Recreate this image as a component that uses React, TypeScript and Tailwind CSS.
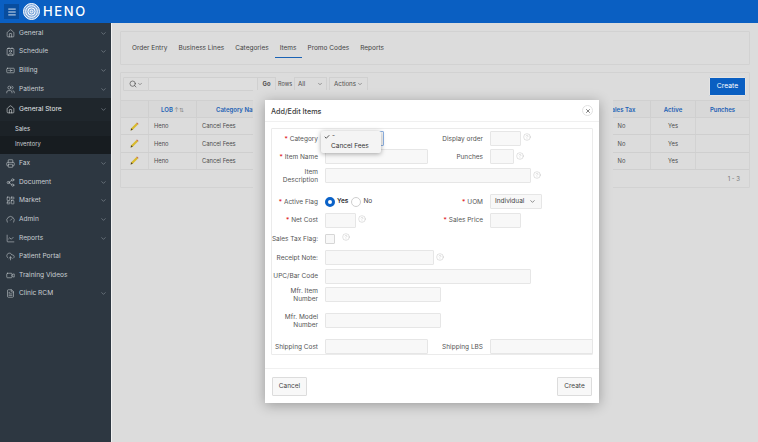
import React from 'react'
import {
  Banknote,
  Check,
  ChevronDown,
  CircleHelp,
  CloudUpload,
  Contact,
  FileText,
  Gauge,
  Home,
  LayoutDashboard,
  LineChart,
  Menu,
  Printer,
  Search,
  Share2,
  Users,
  Video,
  X
} from 'lucide-react'

const navTop = [
  { label: 'General', icon: Home },
  { label: 'Schedule', icon: Contact },
  { label: 'Billing', icon: Banknote },
  { label: 'Patients', icon: Users }
]

const navBottom = [
  { label: 'Fax', icon: Printer, more: true },
  { label: 'Document', icon: Share2, more: true },
  { label: 'Market', icon: LayoutDashboard, more: true },
  { label: 'Admin', icon: Gauge, more: true },
  { label: 'Reports', icon: LineChart, more: true },
  { label: 'Patient Portal', icon: CloudUpload, more: false },
  { label: 'Training Videos', icon: Video, more: false },
  { label: 'Clinic RCM', icon: FileText, more: true }
]

const tabs = ['Order Entry', 'Business Lines', 'Categories', 'Items', 'Promo Codes', 'Reports']

function NavRow({ label, icon: Icon, more = true }: { label: string; icon: typeof Home; more?: boolean }) {
  return (
    <div className="flex h-[18.6px] items-center pl-[6px] pr-[4px] text-[6.6px] text-[#c9ced3]">
      <Icon size={9} strokeWidth={1.5} className="shrink-0 text-[#c9ced3]" />
      <span className="ml-[4px] flex-1 pt-[1px]">{label}</span>
      {more && <ChevronDown size={7} className="text-[#8b949c]" />}
    </div>
  )
}

function Logo() {
  return (
    <svg width="17" height="17" viewBox="0 0 17 17" fill="none" stroke="#ffffff">
      <circle cx="8.5" cy="8.5" r="8" fill="#7fa9dc" strokeWidth="1" />
      <circle cx="8.5" cy="8.5" r="5.8" strokeWidth="1" />
      <circle cx="8.5" cy="8.5" r="3.6" strokeWidth="1" />
      <circle cx="8.5" cy="8.5" r="1.4" strokeWidth="1" />
    </svg>
  )
}

function PencilIcon() {
  return (
    <svg width="9" height="9" viewBox="0 0 9 9">
      <path d="M0.6 8.4 L1.2 6.2 L6.4 1 L8 2.6 L2.8 7.8 Z" fill="#d8b92c" />
      <path d="M6.4 1 L7 0.4 L8.6 2 L8 2.6 Z" fill="#c4583a" />
      <path d="M0.6 8.4 L1.2 6.2 L2.8 7.8 Z" fill="#4a4030" />
    </svg>
  )
}

function Label({ text, required = false, width }: { text: React.ReactNode; required?: boolean; width: string }) {
  return (
    <div className={`${width} flex shrink-0 justify-end whitespace-nowrap text-right text-[6.5px] leading-[8px] text-[#555555]`}>
      <div className="shrink-0">
        {required && <span className="mr-[2px] text-[#e0141a]">*</span>}
        {text}
      </div>
    </div>
  )
}

function Box({ width }: { width: string }) {
  return <div className={`${width} h-[15px] shrink-0 rounded-[1px] border border-[#e6e6e6] bg-[#f8f8f8]`} />
}

function Help({ className = '' }: { className?: string }) {
  return <CircleHelp size={8} strokeWidth={1} className={`shrink-0 text-[#a8a8a8] ${className}`} />
}

function TableRow() {
  return (
    <div className="flex h-[17.3px] items-center border-b border-[#cfcfcf] text-[5.8px] text-[#4c4c4c]">
      <div className="flex h-full w-[28px] items-center justify-center border-r border-[#d2d2d2]">
        <PencilIcon />
      </div>
      <div className="flex h-full w-[48px] items-center border-r border-[#d2d2d2] pl-[5px] pt-[1px]">Heno</div>
      <div className="flex h-full flex-1 items-center pl-[5px] pt-[1px]">Cancel Fees</div>
      <div className="flex h-full w-[58px] items-center justify-center border-r border-[#d2d2d2] pt-[1px]">No</div>
      <div className="flex h-full w-[45px] items-center justify-center border-r border-[#d2d2d2] pt-[1px]">Yes</div>
      <div className="w-[53px]" />
    </div>
  )
}

function Modal() {
  return (
    <div className="absolute left-[153px] top-[77px] flex h-[303px] w-[334px] flex-col bg-white shadow-[0_2px_12px_rgba(0,0,0,0.3)]">
      <div className="flex h-[22px] shrink-0 items-center justify-between border-b border-[#f0f0f0] pl-[6px] pr-[6px]">
        <span className="pt-[3px] text-[7.2px] font-medium text-[#3c3c3c]">Add/Edit Items</span>
        <span className="flex h-[11px] w-[11px] items-center justify-center rounded-full border border-[#e2e2e2]">
          <X size={6} strokeWidth={2.5} className="text-[#333]" />
        </span>
      </div>

      <div className="relative mx-[6px] mt-[6px] h-[227px] rounded-[1px] border border-[#ebebeb]">
        <div className="flex h-[18px] items-center pt-[1px]">
          <Label width="w-[46px]" required text="Category" />
          <div className="ml-[7px] h-[15px] w-[59px] rounded-[1px] border border-[#8db2e4] bg-[#f8f8f8]" />
          <Label width="w-[99px]" text="Display order" />
          <div className="ml-[7px]">
            <Box width="w-[31px]" />
          </div>
          <Help className="mb-[4px] ml-[2px]" />
        </div>
        <div className="flex h-[19px] items-center">
          <Label width="w-[46px]" required text="Item Name" />
          <div className="ml-[7px]">
            <Box width="w-[103px]" />
          </div>
          <Label width="w-[55px]" text="Punches" />
          <div className="ml-[7px]">
            <Box width="w-[24px]" />
          </div>
          <Help className="mb-[2px] ml-[2px]" />
        </div>
        <div className="flex h-[19px] items-center">
          <Label width="w-[46px]" text={<>Item<br />Description</>} />
          <div className="ml-[7px]">
            <Box width="w-[206px]" />
          </div>
          <Help className="mb-[2px] ml-[2px]" />
        </div>
        <div className="mt-[7px] flex h-[19px] items-center">
          <Label width="w-[46px]" required text="Active Flag" />
          <div className="ml-[7px] flex w-[68px] items-center text-[6.5px]">
            <span className="h-[10px] w-[10px] rounded-full border-[3px] border-[#0a62c8] bg-white" />
            <span className="ml-[2px] font-semibold text-[#333]">Yes</span>
            <span className="ml-[3px] h-[10px] w-[10px] rounded-full border border-[#cfcfcf] bg-white" />
            <span className="ml-[2px] text-[#444]">No</span>
          </div>
          <Label width="w-[90px]" required text="UOM" />
          <div className="ml-[7px] flex h-[15px] w-[52px] items-center justify-between rounded-[1px] border border-[#e6e6e6] bg-[#f8f8f8] pl-[4px] pr-[5px] text-[6.5px] text-[#444]">
            Individual
            <ChevronDown size={7} />
          </div>
        </div>
        <div className="flex h-[18px] items-center">
          <Label width="w-[46px]" required text="Net Cost" />
          <div className="ml-[7px]">
            <Box width="w-[31px]" />
          </div>
          <Help className="mb-[2px] ml-[2px]" />
          <Label width="w-[117px]" required text="Sales Price" />
          <div className="ml-[7px]">
            <Box width="w-[31px]" />
          </div>
        </div>
        <div className="flex h-[19px] items-center">
          <Label width="w-[46px]" text="Sales Tax Flag:" />
          <div className="ml-[7px] h-[10px] w-[10px] rounded-[1px] border border-[#d6d6d6] bg-[#f8f8f8]" />
          <Help className="mb-[3px] ml-[7px]" />
        </div>
        <div className="flex h-[19px] items-center">
          <Label width="w-[46px]" text="Receipt Note:" />
          <div className="ml-[7px]">
            <Box width="w-[109px]" />
          </div>
          <Help className="mb-[2px] ml-[2px]" />
        </div>
        <div className="flex h-[18px] items-center">
          <Label width="w-[46px]" text="UPC/Bar Code" />
          <div className="ml-[7px]">
            <Box width="w-[206px]" />
          </div>
        </div>
        <div className="flex h-[19px] items-center">
          <Label width="w-[46px]" text={<>Mfr. Item<br />Number</>} />
          <div className="ml-[7px]">
            <Box width="w-[116px]" />
          </div>
        </div>
        <div className="mt-[7px] flex h-[19px] items-center">
          <Label width="w-[46px]" text={<>Mfr. Model<br />Number</>} />
          <div className="ml-[7px]">
            <Box width="w-[116px]" />
          </div>
        </div>
        <div className="mt-[7px] flex h-[19px] items-center">
          <Label width="w-[46px]" text="Shipping Cost" />
          <div className="ml-[7px]">
            <Box width="w-[103px]" />
          </div>
          <Label width="w-[55px]" text="Shipping LBS" />
          <div className="ml-[7px]">
            <Box width="w-[103px]" />
          </div>
        </div>
      </div>

      <div className="mt-[13px] flex flex-1 items-start justify-between border-t border-[#f0f0f0] px-[7px] pt-[8px]">
        <div className="flex h-[19px] w-[35px] items-center justify-center rounded-[1px] border border-[#dcdcdc] bg-[#f8f8f8] text-[6.5px] text-[#444]">
          Cancel
        </div>
        <div className="flex h-[19px] w-[35px] items-center justify-center rounded-[1px] border border-[#dcdcdc] bg-[#f8f8f8] text-[6.5px] text-[#444]">
          Create
        </div>
      </div>

      <div className="absolute left-[56px] top-[31px] h-[22px] w-[60px] rounded-[2px] bg-[#f4f4f4] text-[6.5px] text-[#333] shadow-[0_1px_5px_rgba(0,0,0,0.35)]">
        <div className="flex h-[10px] items-center pl-[3px] pt-[2px]">
          <Check size={6} strokeWidth={3} className="text-[#222]" />
          <span className="ml-[2px]">-</span>
        </div>
        <div className="flex h-[11px] items-center pl-[10px] pt-[1px]">Cancel Fees</div>
      </div>
    </div>
  )
}

export default function App() {
  return (
    <div className="flex h-[442px] w-[758px] flex-col overflow-hidden bg-[#dcdcdc] font-['Inter','Liberation_Sans',sans-serif]">
      <header className="flex h-[23px] shrink-0 items-center bg-[#0a5fc2] pl-[4px]">
        <div className="flex h-[15px] w-[15px] items-center justify-center bg-[#084d9e]">
          <Menu size={10} className="text-white" />
        </div>
        <div className="ml-[4px]">
          <Logo />
        </div>
        <span className="ml-[3px] text-[13px] font-medium tracking-[1.6px] text-white">HENO</span>
      </header>

      <div className="flex min-h-0 flex-1">
        <aside className="w-[111px] shrink-0 bg-[#2d3741] pt-[1px]">
          {navTop.map((n) => (
            <NavRow key={n.label} label={n.label} icon={n.icon} />
          ))}
          <div className="bg-[#1f262c]">
            <div className="flex h-[23px] items-center pl-[6px] pr-[4px] text-[6.6px] text-[#e4e7ea]">
              <Home size={9} strokeWidth={1.5} />
              <span className="ml-[4px] flex-1 pt-[1px]">General Store</span>
              <ChevronDown size={7} className="text-[#8b949c]" />
            </div>
            <div className="bg-[#171c20] text-[5.8px] text-[#c9ced3]">
              <div className="flex h-[15px] items-center bg-[#1c2227] pl-[15px] font-medium">Sales</div>
              <div className="flex h-[18px] items-center pb-[3px] pl-[15px]">Inventory</div>
            </div>
          </div>
          <div>
            {navBottom.map((n) => (
              <NavRow key={n.label} label={n.label} icon={n.icon} more={n.more} />
            ))}
          </div>
        </aside>
        <div className="w-[1px] shrink-0 bg-[#f2f2f2]" />

        <main className="relative min-w-0 flex-1 pl-[8px] pr-[8px] pt-[8px]">
          <section className="flex h-[34px] items-center rounded-[1px] border border-[#d2d2d2] bg-[#dcdcdc] pl-[11px] pt-[2px] text-[6.5px] text-[#444]">
            {tabs.map((t) => (
              <div
                key={t}
                className={t === 'Items' ? 'relative mr-[11px] flex h-full items-center' : 'mr-[11px] flex h-full items-center'}
              >
                {t}
                {t === 'Items' && (
                  <span className="absolute -left-[5px] -right-[6px] top-[23px] h-[1px] bg-[#1b63b5]" />
                )}
              </div>
            ))}
          </section>

          <section className="mt-[7px] h-[116px] rounded-[1px] border border-[#d2d2d2] bg-[#dcdcdc]">
            <div className="flex h-[27px] items-start pl-[2px] pr-[3px] pt-[4px] text-[6.2px] text-[#4c4c4c]">
              <div className="flex h-[14px] w-[26px] items-center justify-center rounded-l-[1px] border border-[#d0d0d0]">
                <Search size={8} />
                <ChevronDown size={6} />
              </div>
              <div className="h-[14px] w-[108px] border-y border-[#d0d0d0] bg-[#dedede]" />
              <div className="flex h-[14px] w-[19px] items-center justify-center border border-[#d0d0d0] text-[5.8px] font-bold">
                Go
              </div>
              <span className="ml-[2px] flex h-[14px] items-center text-[5.5px]">Rows</span>
              <div className="ml-[2px] flex h-[14px] w-[33px] items-center justify-between border border-[#d0d0d0] pl-[3px] pr-[3px]">
                All
                <ChevronDown size={6} />
              </div>
              <div className="ml-[2px] flex h-[14px] w-[39px] items-center justify-center gap-[1px] border border-[#d0d0d0]">
                Actions
                <ChevronDown size={6} />
              </div>
              <div className="ml-auto flex h-[19px] w-[37px] items-center justify-center rounded-[1px] border border-[#e4e4e4] bg-[#0a5fc2] text-[6.8px] text-white">
                Create
              </div>
            </div>
            <div className="flex h-[18px] items-center border-y border-[#d0d0d0] bg-[#d8d8d8] text-[6px] font-semibold text-[#1a5fb4]">
              <div className="h-full w-[28px] border-r border-[#cfcfcf]" />
              <div className="flex h-full w-[48px] items-center justify-center gap-[1px] border-r border-[#cfcfcf]">
                LOB <span className="font-normal text-[#888]">↑⇅</span>
              </div>
              <div className="flex h-full flex-1 items-center pl-[19px]">Category Name</div>
              <div className="flex h-full w-[58px] items-center justify-center border-r border-[#cfcfcf]">Sales Tax</div>
              <div className="flex h-full w-[45px] items-center justify-center border-r border-[#cfcfcf]">Active</div>
              <div className="flex h-full w-[53px] items-center justify-center">Punches</div>
            </div>
            <TableRow />
            <TableRow />
            <TableRow />
            <div className="flex h-[17px] items-center justify-end pr-[9px] text-[6px] text-[#777]">1 - 3</div>
          </section>

          <div className="absolute bottom-0 left-[141px] top-[67px] w-[360px] bg-[#dcdcdc]" />
          <Modal />
        </main>
      </div>
    </div>
  )
}
